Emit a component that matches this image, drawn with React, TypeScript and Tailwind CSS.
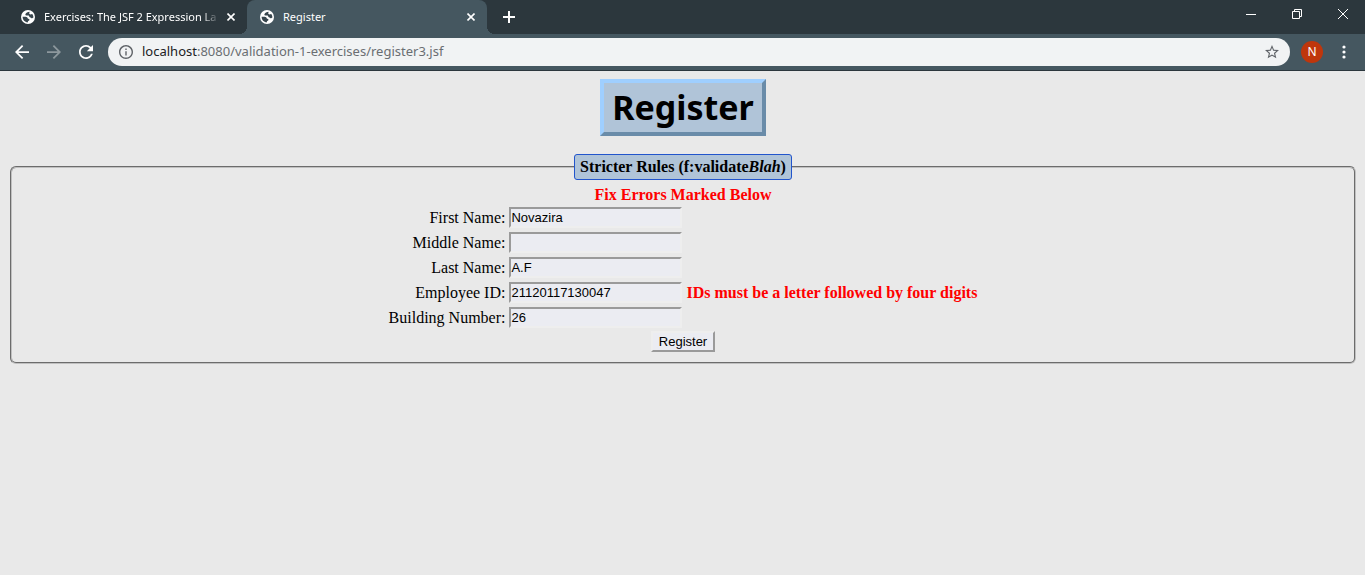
import type { ReactNode } from "react";

type Field = { id: string; label: string; value: string; error?: string };

const fields: Field[] = [
  { id: "firstName", label: "First Name:", value: "Novazira" },
  { id: "middleName", label: "Middle Name:", value: "" },
  { id: "lastName", label: "Last Name:", value: "A.F" },
  {
    id: "employeeId",
    label: "Employee ID:",
    value: "21120117130047",
    error: "IDs must be a letter followed by four digits",
  },
  { id: "building", label: "Building Number:", value: "26" },
];

function Globe() {
  return (
    <svg viewBox="0 0 14 14" className="h-3.5 w-3.5 shrink-0" aria-hidden="true">
      <circle cx="7" cy="7" r="7" fill="#fff" />
      <path
        d="M8.6 1.8 C6.6 2 5 2.7 4.4 4.2 C4.2 5.2 5 5.6 6.2 5.6 H7.6 C8.2 6 8 6.8 8.8 7.2 C9.8 7.5 10 8.2 11.2 8.2 L12.4 7.6 C12.5 6.2 12 4.8 11.2 3.9 L9.4 4.6 L8.2 3.8 Z"
        fill="#37454d"
      />
      <path
        d="M1.6 6.8 H4.6 C5.8 6.9 6.6 7.6 6.8 8.6 L8.4 9.2 C8.6 10.2 8 10.8 7.2 11 L6.6 12.4 C3.8 12.2 1.7 10 1.6 6.8 Z"
        fill="#37454d"
      />
    </svg>
  );
}

function CloseIcon() {
  return (
    <svg viewBox="0 0 8 8" className="h-2 w-2" aria-hidden="true">
      <path d="M0.5 0.5 7.5 7.5 M7.5 0.5 0.5 7.5" stroke="#fff" strokeWidth="1.6" />
    </svg>
  );
}

function IconButton({ label, children }: { label: string; children: ReactNode }) {
  return (
    <button type="button" aria-label={label} className="flex h-8 w-8 shrink-0 items-center justify-center">
      {children}
    </button>
  );
}

function WindowButton({ label, children }: { label: string; children: ReactNode }) {
  return (
    <button type="button" aria-label={label} className="flex h-7 w-[46px] items-center justify-center pl-0.5">
      <svg viewBox="0 0 10 10" className="h-2.5 w-2.5" fill="none" stroke="#fff" strokeWidth="1">
        {children}
      </svg>
    </button>
  );
}

function TabStrip() {
  return (
    <div className="flex h-[34px] bg-[#2c373d] text-[12px] text-white">
      <div className="flex w-[247px] items-center pl-[21px] pr-2">
        <Globe />
        <span className="ml-[9px] w-[180px] whitespace-nowrap text-[11px] [mask-image:linear-gradient(to_right,black_88%,transparent_98%)]">
          Exercises: The JSF 2 Expression La
        </span>
        <button type="button" aria-label="Close tab" className="ml-auto p-1">
          <CloseIcon />
        </button>
      </div>
      <div className="relative flex w-60 items-center rounded-t-lg bg-[#455760] pl-[13px] pr-2">
        <span className="absolute bottom-0 -left-2 h-2 w-2 bg-[radial-gradient(circle_at_0_0,#2c373d_8px,#455760_8px)]" />
        <span className="absolute bottom-0 -right-2 h-2 w-2 bg-[radial-gradient(circle_at_100%_0,#2c373d_8px,#455760_8px)]" />
        <Globe />
        <span className="ml-[9px] text-[11px]">Register</span>
        <button type="button" aria-label="Close tab" className="ml-auto p-1">
          <CloseIcon />
        </button>
      </div>
      <button type="button" aria-label="New tab" className="flex w-11 items-center justify-center">
        <svg viewBox="0 0 12 12" className="h-3 w-3" aria-hidden="true">
          <path d="M6 0V12M0 6H12" stroke="#fff" strokeWidth="2" />
        </svg>
      </button>
      <div className="ml-auto flex">
        <WindowButton label="Minimize">
          <path d="M0 5.5H10" />
        </WindowButton>
        <WindowButton label="Restore">
          <path d="M0.5 2.5H7.5V9.5H0.5ZM2.5 2.5V0.5H9.5V7.5H7.5" />
        </WindowButton>
        <WindowButton label="Close">
          <path d="M0 0 10 10M10 0 0 10" />
        </WindowButton>
      </div>
    </div>
  );
}

function Toolbar() {
  return (
    <div className="flex h-[37px] items-center border-b border-[#2c373d] bg-[#455760] pl-1.5 pr-2.5">
      <IconButton label="Back">
        <svg viewBox="4 4 16 16" className="h-3.5 w-3.5" fill="#fff">
          <path d="M20 11H7.83l5.59-5.59L12 4l-8 8 8 8 1.41-1.41L7.83 13H20v-2z" />
        </svg>
      </IconButton>
      <IconButton label="Forward">
        <svg viewBox="4 4 16 16" className="h-3.5 w-3.5" fill="#8d989d">
          <path d="M12 4l-1.41 1.41L16.17 11H4v2h12.17l-5.58 5.59L12 20l8-8z" />
        </svg>
      </IconButton>
      <IconButton label="Reload">
        <svg viewBox="4 4 16 16" className="h-3.5 w-3.5" fill="#fff">
          <path d="M17.65 6.35C16.2 4.9 14.21 4 12 4c-4.42 0-7.99 3.58-7.99 8s3.57 8 7.99 8c3.73 0 6.84-2.55 7.73-6h-2.08c-.82 2.33-3.04 4-5.65 4-3.31 0-6-2.69-6-6s2.69-6 6-6c1.66 0 3.14.69 4.22 1.78L13 11h7V4l-2.35 2.35z" />
        </svg>
      </IconButton>
      <div className="ml-1.5 flex h-7 flex-1 items-center rounded-full bg-[#f1f3f4] pl-[11px] pr-[11px]">
        <svg viewBox="2 2 20 20" className="h-3.5 w-3.5 shrink-0" fill="#5f6368" aria-hidden="true">
          <path d="M11 17h2v-6h-2v6zm1-15C6.48 2 2 6.48 2 12s4.48 10 10 10 10-4.48 10-10S17.52 2 12 2zm0 18c-4.41 0-8-3.59-8-8s3.59-8 8-8 8 3.59 8 8-3.59 8-8 8zM11 9h2V7h-2v2z" />
        </svg>
        <a href="#top" className="ml-[9px] flex-1 text-[13px] text-[#6a6e72]">
          <span className="text-[#202124]">localhost</span>:8080/validation-1-exercises/register3.jsf
        </a>
        <button type="button" aria-label="Bookmark this page">
          <svg viewBox="2 2 20 20" className="h-3.5 w-3.5" fill="#5f6368">
            <path d="M22 9.24l-7.19-.62L12 2 9.19 8.63 2 9.24l5.46 4.73L5.82 21 12 17.27 18.18 21l-1.63-7.03L22 9.24zM12 15.4l-3.76 2.27 1-4.28-3.32-2.88 4.38-.38L12 6.1l1.71 4.04 4.38.38-3.32 2.88 1 4.28L12 15.4z" />
          </svg>
        </button>
      </div>
      <button
        type="button"
        aria-label="Profile"
        className="ml-[11px] flex h-[22px] w-[22px] items-center justify-center rounded-full bg-[#bf360c] text-[12px] text-white"
      >
        N
      </button>
      <IconButton label="Menu">
        <svg viewBox="0 0 4 14" className="ml-2.5 h-3.5 w-1" fill="#fff">
          <circle cx="2" cy="2" r="1.6" />
          <circle cx="2" cy="7" r="1.6" />
          <circle cx="2" cy="12" r="1.6" />
        </svg>
      </IconButton>
    </div>
  );
}

function FieldRow({ field }: { field: Field }) {
  return (
    <>
      <label htmlFor={field.id} className="text-right">
        {field.label}
      </label>
      <input
        id={field.id}
        type="text"
        defaultValue={field.value}
        className="h-[21px] w-[173px] border-2 border-t-[#9a9a9a] border-r-[#eeeeee] border-b-[#eeeeee] border-l-[#9a9a9a] bg-[#ebecf2] font-['Liberation_Sans',Arial,sans-serif] text-[13px]"
      />
      <span className="font-bold text-[#ff0000]">{field.error}</span>
    </>
  );
}

export default function App() {
  return (
    <div className="min-h-screen bg-[#e9e9e9] text-black">
      <header className="font-['Noto_Sans','Open_Sans',sans-serif]">
        <TabStrip />
        <Toolbar />
      </header>
      <main className="flex flex-col items-center pt-2 pr-[9px] pb-2 pl-2.5 font-['Liberation_Serif','Times_New_Roman',serif] text-[16px] leading-5">
        <h1 className="border-4 border-t-[#9fcfff] border-r-[#6a8ca9] border-b-[#6a8ca9] border-l-[#9fcfff] bg-[#b0c4d8] px-2 py-1 font-['Noto_Sans',Verdana,sans-serif] text-[34px] leading-[41px] font-bold">
          Register
        </h1>
        <form className="mt-[18px] w-full" onSubmit={(event) => event.preventDefault()}>
          <fieldset className="rounded-md border-2 border-[#c0c0c0] [border-style:groove] pb-2.5">
            <legend className="mx-auto rounded-[3px] border border-[#2255cc] bg-[#b0c4d8] px-[5px] py-0.5 font-bold">
              Stricter Rules (f:validate<em>Blah</em>)
            </legend>
            <div className="flex flex-col items-center pt-[5px]">
              <p className="font-bold text-[#ff0000]">Fix Errors Marked Below</p>
              <div className="mt-0.5 grid grid-cols-[auto_auto_auto] items-center gap-x-1 gap-y-1">
                {fields.map((field) => (
                  <FieldRow key={field.id} field={field} />
                ))}
              </div>
              <button
                type="submit"
                className="mt-[3px] h-[21px] border-2 border-t-[#eeeeee] border-r-[#9a9a9a] border-b-[#9a9a9a] border-l-[#eeeeee] bg-[#ebecf2] px-1.5 font-['Liberation_Sans',Arial,sans-serif] text-[13px] leading-4"
              >
                Register
              </button>
            </div>
          </fieldset>
        </form>
      </main>
    </div>
  );
}
